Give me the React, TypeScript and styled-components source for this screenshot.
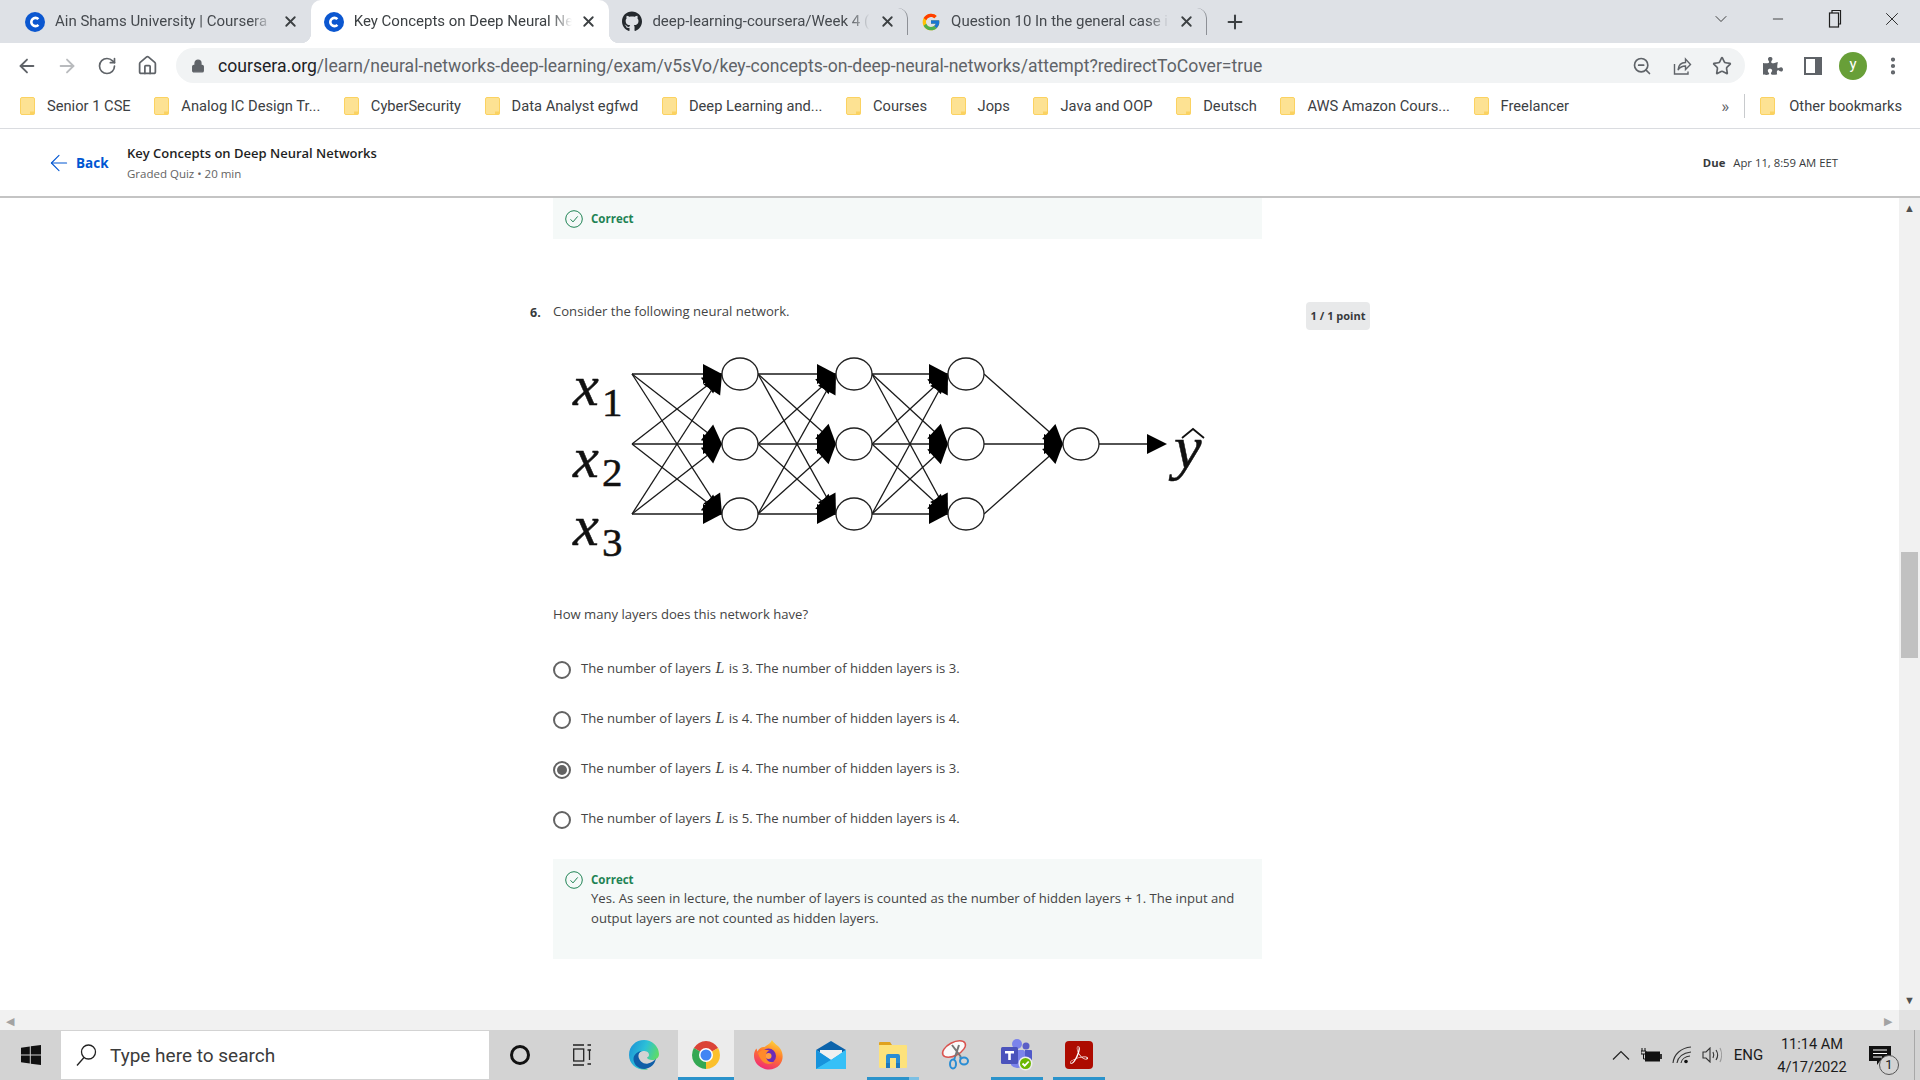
import * as React from 'react';
import styled, { createGlobalStyle } from 'styled-components';
import { ArrowLeft, ArrowRight, RotateCw, House, ZoomOut, Star, X, Plus, ChevronDown, Minus, Lock, EllipsisVertical } from 'lucide-react';
import { FaGithub, FaPuzzlePiece } from 'react-icons/fa';
import { FcGoogle } from 'react-icons/fc';
import { SiAdobeacrobatreader } from 'react-icons/si';

const GlobalStyle = createGlobalStyle`
	html, body {
		margin: 0;
		padding: 0;
		background: #fff;
		overflow: hidden;
	}
	* {
		box-sizing: border-box;
	}
`;

const UI_FONT = `Roboto, "Liberation Sans", sans-serif`;
const PAGE_FONT = `"Open Sans", "Noto Sans", sans-serif`;

const Screen = styled.div`
	width: 1920px;
	height: 1080px;
	display: flex;
	flex-direction: column;
	overflow: hidden;
	font-family: ${PAGE_FONT};
`;

/* browser chrome */
const TabStrip = styled.div`
	height: 43px;
	flex: none;
	display: flex;
	padding-left: 12px;
	background: #dee1e6;
	font-family: ${UI_FONT};
`;

const Tab = styled.div<{ $active?: boolean; $divider?: boolean }>`
	position: relative;
	width: 298.7px;
	height: 43px;
	display: flex;
	align-items: center;
	padding-left: 13px;
	color: ${({ $active }) => ($active ? '#3c4043' : '#45494e')};
	background: ${({ $active }) => ($active ? '#fff' : 'transparent')};
	border-radius: 10px 10px 0 0;
	border-right: ${({ $divider }) => ($divider ? '1px solid #8d9096' : '0')};
	background-clip: padding-box;

	${({ $divider }) => ($divider ? 'height: 27px; margin-top: 8px;' : '')}

	${({ $active }) =>
		$active
			? `
		&::before, &::after {
			content: '';
			position: absolute;
			bottom: 0;
			width: 10px;
			height: 10px;
		}
		&::before {
			left: -10px;
			background: radial-gradient(circle at 0 0, #dee1e6 10px, #fff 10.5px);
		}
		&::after {
			right: -10px;
			background: radial-gradient(circle at 100% 0, #dee1e6 10px, #fff 10.5px);
		}
	`
			: ''}
`;

const Favicon = styled.span`
	width: 20px;
	height: 20px;
	flex: none;
	display: flex;
	align-items: center;
	justify-content: center;
`;

const TabTitle = styled.span`
	width: 222px;
	margin-left: 10px;
	padding-bottom: 2px;
	font-size: 15px;
	white-space: nowrap;
	-webkit-mask-image: linear-gradient(90deg, #000 196px, transparent 218px);
	mask-image: linear-gradient(90deg, #000 196px, transparent 218px);
`;

const TabClose = styled.span`
	width: 20px;
	height: 20px;
	margin-left: 3px;
	flex: none;
	display: flex;
	align-items: center;
	justify-content: center;
	color: #3c4043;
`;

const NewTab = styled.span`
	width: 30px;
	height: 43px;
	margin-left: 13px;
	display: flex;
	align-items: center;
	justify-content: center;
	color: #3c4043;
`;

const WindowControls = styled.div`
	margin-left: auto;
	display: flex;
`;

const WindowButton = styled.span`
	width: 57px;
	height: 38px;
	display: flex;
	align-items: center;
	justify-content: center;
	color: #1f1f1f;
`;

const Toolbar = styled.div`
	height: 45px;
	flex: none;
	display: flex;
	align-items: center;
	padding: 0 7px;
	background: #fff;
	font-family: ${UI_FONT};
`;

const ToolButton = styled.span<{ $muted?: boolean }>`
	width: 40px;
	height: 35px;
	flex: none;
	display: flex;
	align-items: center;
	justify-content: center;
	color: ${({ $muted }) => ($muted ? '#b9bbbe' : '#5f6368')};
`;

const Omnibox = styled.div`
	flex: 1;
	height: 35px;
	margin: 0 8px 0 9px;
	display: flex;
	align-items: center;
	border-radius: 18px;
	background: #f1f3f4;
	padding: 0 3px 0 12px;
	font-size: 17.6px;
	color: #5f6368;
`;

const LockIcon = styled.span`
	width: 20px;
	display: flex;
	justify-content: center;
	color: #5f6368;
`;

const UrlText = styled.span`
	margin-left: 10px;
	white-space: nowrap;

	b {
		font-weight: 400;
		color: #202124;
	}
`;

const OmniboxActions = styled.div`
	margin-left: auto;
	display: flex;
`;

const Avatar = styled.span`
	width: 28px;
	height: 28px;
	border-radius: 50%;
	background: #689f38;
	color: #fff;
	font-size: 15px;
	display: flex;
	align-items: center;
	justify-content: center;
	padding-bottom: 3px;
`;

const BookmarkBar = styled.div`
	height: 41px;
	flex: none;
	display: flex;
	align-items: center;
	padding: 0 0 5px 20px;
	gap: 23.6px;
	background: #fff;
	border-bottom: 1px solid #dadce0;
	font-family: ${UI_FONT};
	font-size: 14.7px;
	color: #3c4043;
`;

const Bookmark = styled.span`
	display: flex;
	align-items: center;
	gap: 12px;
	white-space: nowrap;
`;

const OtherBookmarks = styled(Bookmark)`
	gap: 14px;
`;

const BookmarkOverflow = styled.div`
	margin-left: auto;
	display: flex;
	align-items: center;
	gap: 21px;
	padding-right: 18px;
`;

const Chevrons = styled.span`
	font-size: 17px;
	color: #5f6368;
	padding-right: 15px;
	margin-right: -6px;
	border-right: 1px solid #c8cacd;
	line-height: 24px;
`;

/* coursera page */
const CourseHeader = styled.header`
	height: 69px;
	flex: none;
	display: flex;
	align-items: center;
	padding: 0 82px 0 50px;
	background: #fff;
	border-bottom: 2px solid #c4c4c4;
`;

const BackLink = styled.span`
	display: flex;
	align-items: center;
	width: 77px;
	color: #0056d2;
	font-size: 13.5px;
	font-weight: 700;
`;

const BackArrow = styled(ArrowLeft)`
	margin: 0 4px 0 -4px;
	flex: none;
`;

const CourseTitle = styled.div`
	display: flex;
	flex-direction: column;
	gap: 4px;
	padding-bottom: 1px;
`;

const CourseName = styled.span`
	font-size: 13px;
	font-weight: 600;
	line-height: 18px;
	color: #1f1f1f;
`;

const CourseMeta = styled.span`
	font-size: 11.5px;
	line-height: 15px;
	color: #636363;
`;

const DueDate = styled.div`
	margin-left: auto;
	font-size: 11.3px;
	color: #373a3c;

	b {
		font-weight: 700;
		margin-right: 8px;
	}
`;

const PageBody = styled.div`
	flex: 1;
	min-height: 0;
	display: flex;
	background: #fff;
`;

const QuizColumn = styled.main`
	flex: 1;
	min-width: 0;
	padding-left: 530px;
	overflow: hidden;
`;

const Feedback = styled.div<{ $height: number; $indent?: boolean }>`
	width: 709px;
	height: ${({ $height }) => $height}px;
	margin-left: ${({ $indent }) => ($indent ? '23px' : '0')};
	padding: 12px 20px 0 12px;
	display: grid;
	grid-template-columns: 18px 1fr;
	align-content: start;
	column-gap: 8px;
	background: #f5f9f8;
`;

const CorrectLabel = styled.div`
	font-size: 11.5px;
	font-weight: 700;
	line-height: 18px;
	color: #1f8354;
`;

const FeedbackText = styled.div`
	grid-column: 2;
	margin-top: -1px;
	font-size: 13.1px;
	line-height: 20px;
	color: #444;
`;

const QuestionRow = styled.section`
	margin-top: 63px;
	display: grid;
	grid-template-columns: 23px 709px auto;
	justify-content: start;
`;

const QuestionNumber = styled.div`
	font-size: 12.5px;
	font-weight: 700;
	line-height: 22px;
	color: #373a3c;
`;

const Prompt = styled.p`
	margin: 0;
	font-size: 13.1px;
	line-height: 18px;
	color: #444;
`;

const NetworkFigure = styled.svg`
	display: block;
	width: 700px;
	height: 230px;
	margin-top: 30px;
`;

const SubPrompt = styled(Prompt)`
	margin-top: 25px;
`;

const Options = styled.div`
	margin-top: 22px;
	display: flex;
	flex-direction: column;
`;

const Option = styled.label`
	height: 50px;
	display: flex;
	align-items: center;
	gap: 10px;
	font-size: 13.1px;
	color: #444;
`;

const Radio = styled.span<{ $checked?: boolean }>`
	width: 18px;
	height: 18px;
	flex: none;
	display: flex;
	align-items: center;
	justify-content: center;
	border: 2px solid #636363;
	border-radius: 50%;

	&::after {
		content: '';
		width: 10px;
		height: 10px;
		border-radius: 50%;
		background: ${({ $checked }) => ($checked ? '#636363' : 'transparent')};
	}
`;

const OptionText = styled.span`
	padding-bottom: 4px;

	i {
		margin: 0 1px;
		font-family: 'Liberation Serif', serif;
		font-size: 16px;
	}
`;

const AnswerFeedback = styled(Feedback)`
	margin-top: 14px;
`;

const PointBadge = styled.div`
	margin-left: 44px;
	width: 64px;
	height: 28px;
	display: flex;
	align-items: center;
	justify-content: center;
	padding-bottom: 2px;
	border-radius: 4px;
	background: #e8e9ea;
	font-size: 11px;
	font-weight: 700;
	color: #373a3c;
`;

const VerticalScrollbar = styled.div`
	width: 21px;
	flex: none;
	display: flex;
	flex-direction: column;
	align-items: center;
	background: #f1f1f1;
	color: #505050;
`;

const ScrollArrow = styled.span`
	width: 17px;
	height: 20px;
	font-size: 11px;
	line-height: 20px;
	text-align: center;
`;

const ScrollThumb = styled.div`
	width: 17px;
	height: 106px;
	margin-top: 334px;
	background: #c1c1c1;
`;

const ScrollSpacer = styled.div`
	flex: 1;
`;

const HorizontalScrollbar = styled.div`
	height: 20px;
	flex: none;
	display: flex;
	align-items: center;
	justify-content: space-between;
	padding: 0 7px 0 6px;
	background: #f1f1f1;
	border-right: 21px solid #e2e2e2;
	font-size: 11px;
	color: #a3a3a3;
`;

/* windows taskbar */
const Taskbar = styled.footer`
	height: 50px;
	flex: none;
	display: flex;
	align-items: center;
	background: #d3d3d3;
	color: #1c1c1c;
	font-family: ${UI_FONT};
`;

const StartButton = styled.span`
	width: 61px;
	height: 50px;
	flex: none;
	display: flex;
	align-items: center;
	justify-content: center;
`;

const SearchBox = styled.div`
	width: 428px;
	height: 48px;
	flex: none;
	display: flex;
	align-items: center;
	gap: 13px;
	padding-left: 14px;
	background: #fff;
	font-size: 19px;
	color: #3b3b3b;
`;

const TaskCell = styled.span<{ $running?: boolean; $selected?: boolean; $stacked?: boolean }>`
	width: ${({ $selected }) => ($selected ? '56px' : '52px')};
	height: 50px;
	margin: 0 ${({ $selected }) => ($selected ? '3.05px' : '5.05px')};
	flex: none;
	display: flex;
	align-items: center;
	justify-content: center;
	background: ${({ $selected }) => ($selected ? '#ececec' : 'transparent')};
	border-bottom: 3px solid ${({ $running }) => ($running ? '#2b93cb' : 'transparent')};
	${({ $stacked }) => ($stacked ? 'border-image: linear-gradient(90deg, #2b93cb 80%, #7cc0e4 80%) 1;' : '')}
	padding-top: 3px;
`;

const Tray = styled.div`
	margin-left: auto;
	display: flex;
	align-items: center;
	height: 50px;
`;

const TrayIcon = styled.span<{ $width: number }>`
	width: ${({ $width }) => $width}px;
	height: 50px;
	display: flex;
	align-items: center;
	justify-content: center;
	font-size: 15px;
	color: #1c1c1c;
`;

const Clock = styled.div`
	width: 82px;
	padding-top: 2px;
	display: flex;
	flex-direction: column;
	align-items: center;
	gap: 4px;
	font-size: 14.6px;
	line-height: 19px;
	color: #1c1c1c;
`;

const NotificationCell = styled.span`
	position: relative;
	width: 62px;
	height: 50px;
	display: flex;
	align-items: center;
	padding-left: 16px;
	border-right: 1px solid #a8a8a8;
`;

const NotificationCount = styled.span`
	position: absolute;
	left: 26px;
	top: 25px;
	width: 20px;
	height: 20px;
	border-radius: 50%;
	border: 1px solid #555;
	background: #d3d3d3;
	font-size: 13px;
	line-height: 18px;
	text-align: center;
`;

const ShowDesktop = styled.span`
	width: 5px;
`;

const CourseraIcon = () => (
	<svg width="20" height="20" viewBox="0 0 20 20">
		<circle cx="10" cy="10" r="10" fill="#0b57d0" />
		<path d="M13.4 7.2a4.1 4.1 0 1 0 0 5.6" fill="none" stroke="#fff" strokeWidth="2.6" />
	</svg>
);

const FolderIcon = () => (
	<svg width="15" height="18" viewBox="0 0 15 18">
		<rect x="0.5" y="0.5" width="14" height="17" rx="1.5" fill="#fde293" stroke="#fbd261" />
		<path d="M10 17.5v-3h4.5v3z" fill="#fbd261" />
	</svg>
);

const RestoreIcon = () => (
	<svg width="14" height="20" viewBox="0 0 14 20" fill="none" stroke="#1f1f1f" strokeWidth="1.2">
		<rect x="1.5" y="4" width="9" height="14" />
		<path d="M4 4V1.5h8.5V15H10.5" />
	</svg>
);

const ShareIcon = () => (
	<svg width="20" height="20" viewBox="0 0 20 20" fill="none" stroke="#5f6368" strokeWidth="1.4">
		<path d="M2.5 8v10h13.5v-2.5" />
		<path d="M6 14c.5-5 3.5-7.5 7.5-7.5V3l5 5.5-5 5V10c-3.200 0-5.700 1.200-7.500 4z" />
	</svg>
);

const PanelIcon = () => (
	<svg width="18" height="18" viewBox="0 0 18 18">
		<path fillRule="evenodd" d="M0 0h18v18H0zM2 2v14h9V2z" fill="#5f6368" />
	</svg>
);

const CorrectIcon = () => (
	<svg width="18" height="18" viewBox="0 0 18 18" fill="none" stroke="#1f8354">
		<circle cx="9" cy="9" r="8.3" strokeWidth="1" />
		<path d="M5.500 9.300l2.500 2.600 4.700-5.500" strokeWidth="1" />
	</svg>
);

const WindowsLogo = () => (
	<svg width="20" height="20" viewBox="0 0 20 20" fill="#111">
		<path d="M0 2.800l8.800-1.300v8H0zM9.800 1.300L20 0v9.500H9.800zM0 10.500h8.800v8L0 17.200zM9.800 10.500H20V20L9.800 18.700z" />
	</svg>
);

const SearchGlass = () => (
	<svg width="22" height="22" viewBox="0 0 22 22" fill="none" stroke="#222" strokeWidth="1.300">
		<circle cx="13.500" cy="8" r="7" />
		<path d="M9 13.500L2 21.500" />
	</svg>
);

const CortanaIcon = () => (
	<svg width="22" height="22" viewBox="0 0 22 22">
		<circle cx="11" cy="11" r="8.500" fill="none" stroke="#111" strokeWidth="3" />
	</svg>
);

const TaskViewIcon = () => (
	<svg width="18" height="22" viewBox="0 0 18 22" fill="none" stroke="#222" strokeWidth="1.300">
		<path d="M0 1h11M0 21h11" />
		<rect x="0.700" y="5" width="10" height="12" />
		<path d="M14.500 1h3.500M14.500 6h3.500M16.500 6v10M14.500 20h3.500" />
	</svg>
);

const EdgeIcon = () => (
	<svg width="30" height="30" viewBox="0 0 30 30">
		<defs>
			<linearGradient id="edgeGrad" x1="0" y1="0" x2="1" y2="0.400">
				<stop offset="0" stopColor="#1a8ed6" />
				<stop offset="0.550" stopColor="#2cc0d8" />
				<stop offset="1" stopColor="#5ddc68" />
			</linearGradient>
		</defs>
		<path d="M15 0a15 15 0 0 1 15 14c0 4-3.500 6-7 6-2.500 0-5-1-5-2.500 3-1 3-6-2.500-6.500-5 0-8 4-6.500 9 1 3.500 5 7 10 9.500C9 31 0 25 0 15 0 6 7 0 15 0z" fill="url(#edgeGrad)" />
		<path d="M9.500 17c1 4 5 7.500 9.500 6.500 3-.7 6-2.500 8-5-1 5-5 10-11.500 10.500C8 29 4 23 4.500 18c1-4 4-6.500 8-7-2 1-3.500 3-3 6z" fill="#0f5ea8" />
	</svg>
);

const ChromeIcon = () => (
	<svg width="28" height="28" viewBox="0 0 28 28">
		<path d="M14 14L1.880 7a14 14 0 0 1 24.240 0z" fill="#db4437" />
		<path d="M14 14l12.120-7A14 14 0 0 1 14 28z" fill="#fbc02d" />
		<path d="M14 14v14A14 14 0 0 1 1.880 7z" fill="#34a853" />
		<circle cx="14" cy="14" r="7" fill="#fff" />
		<circle cx="14" cy="14" r="5.500" fill="#4285f4" />
	</svg>
);

const FirefoxIcon = () => (
	<svg width="29" height="30" viewBox="0 0 29 30">
		<defs>
			<linearGradient id="foxGrad" x1="0.700" y1="0" x2="0.300" y2="1">
				<stop offset="0" stopColor="#ffd83b" />
				<stop offset="0.450" stopColor="#ff7a2b" />
				<stop offset="1" stopColor="#f0267a" />
			</linearGradient>
		</defs>
		<path d="M18 0c1 3 6 5 8.500 9 3 5 3 11-1 16-4 4.500-11 6-17 3C3 25.500 0 21 0 15.500c0-3 1-5.500 2.500-7l1 3C5 8 8 6.500 10.500 7 14 4.500 17 3 18 0z" fill="url(#foxGrad)" />
		<circle cx="14.500" cy="16" r="7.500" fill="#6a2bb8" />
		<circle cx="14.500" cy="16" r="3" fill="#ff9f45" />
		<path d="M4 13c4-4 8-4 12-2-3 0-4 2-4 5 0 4 3 7 8 6-5 4-13 2-16-9z" fill="#ff8a2b" />
	</svg>
);

const MailIcon = () => (
	<svg width="30" height="28" viewBox="0 0 30 28">
		<path d="M0 9L15 0l15 9-15 9z" fill="#0b63ab" />
		<path d="M4 9h22v6l-11 6-11-6z" fill="#f0f0f0" />
		<path d="M0 9l15 10L30 9v19H0z" fill="#2ea9ec" />
		<path d="M0 9l15 10-15 9z" fill="#1793dc" />
		<path d="M30 9v19H0l15-9z" fill="#36c0f7" />
	</svg>
);

const FilesIcon = () => (
	<svg width="28" height="26" viewBox="0 0 28 26">
		<path d="M0 1a1 1 0 0 1 1-1h10l2 3H0z" fill="#e0a21e" />
		<path d="M0 3h27a1 1 0 0 1 1 1v21a1 1 0 0 1-1 1H1a1 1 0 0 1-1-1z" fill="#fde27b" />
		<path d="M7 21v-7a2 2 0 0 1 2-2h10a2 2 0 0 1 2 2v7h-4v-5h-6v5z" fill="#2a8dd4" />
		<path d="M7 21h4v5H7zM17 21h4v5h-4z" fill="#1f78bd" />
	</svg>
);

const SnipIcon = () => (
	<svg width="30" height="30" viewBox="0 0 30 30" fill="none">
		<ellipse cx="14" cy="9" rx="12.500" ry="6.500" transform="rotate(-28 14 9)" fill="#fafafa" stroke="#d9534f" strokeWidth="1.500" />
		<path d="M12 5l9 12M19 5l-4 12" stroke="#777" strokeWidth="2" />
		<ellipse cx="13" cy="24" rx="3" ry="4.500" stroke="#2a8dd4" strokeWidth="2" />
		<ellipse cx="24" cy="21" rx="4" ry="3.500" stroke="#2a8dd4" strokeWidth="2" />
		<path d="M15 17l-1 3M20 17l1 2" stroke="#2a8dd4" strokeWidth="2" />
	</svg>
);

const TeamsIcon = () => (
	<svg width="32" height="32" viewBox="0 0 32 32">
		<circle cx="25" cy="7" r="3.500" fill="#5b5fc7" />
		<circle cx="16" cy="5" r="5" fill="#7b83eb" />
		<path d="M10 11h12a2 2 0 0 1 2 2v10a8 8 0 0 1-14 3z" fill="#7b83eb" />
		<path d="M24 11h6a1 1 0 0 1 1 1v8a5 5 0 0 1-7 4z" fill="#5059c9" />
		<rect x="0" y="8" width="17" height="17" rx="1.500" fill="#4b53bc" />
		<path d="M4 12h9v2.500h-3.200V21H7.200v-6.500H4z" fill="#fff" />
		<circle cx="24.500" cy="24.500" r="7" fill="#eee" />
		<circle cx="24.500" cy="24.500" r="5.500" fill="#6bb700" />
		<path d="M21.500 24.500l2.200 2.200 4-4.200" fill="none" stroke="#fff" strokeWidth="1.800" />
	</svg>
);

const AcrobatIcon = () => (
	<svg width="28" height="28" viewBox="0 0 28 28">
		<rect width="28" height="28" rx="4" fill="#ad0b00" />
		<g transform="translate(5 5)">
			<SiAdobeacrobatreader size={18} color="#fff" />
		</g>
	</svg>
);

const SmallChevron = () => (
	<svg width="18" height="10" viewBox="0 0 18 10" fill="none" stroke="#222" strokeWidth="1.200">
		<path d="M1 9.500L9 1.500l8 8" />
	</svg>
);

const BatteryIcon = () => (
	<svg width="21" height="14" viewBox="0 0 21 14">
		<rect x="4" y="3.500" width="15" height="10" fill="#111" />
		<rect x="19" y="6" width="2" height="5" fill="#333" />
		<path d="M1 0v3M4 0v3M0 3h5v3H0zM2.500 6v5h2" fill="none" stroke="#111" strokeWidth="1" />
	</svg>
);

const WifiIcon = () => (
	<svg width="20" height="18" viewBox="0 0 20 18" fill="none" stroke="#333" strokeWidth="1.100">
		<path d="M1 17C2 8 9 2 19 1M5 17c1-6 6-10 14-11M9 17c.5-3.500 4-6.500 9-7" />
		<circle cx="14" cy="15.500" r="1.800" fill="#111" stroke="none" />
	</svg>
);

const SpeakerIcon = () => (
	<svg width="20" height="16" viewBox="0 0 20 16" fill="none" stroke="#333" strokeWidth="1.100">
		<path d="M1 5h3l4-4v14l-4-4H1z" />
		<path d="M11 5c1 2 1 4 0 6M14 3c2 3 2 7 0 10" />
		<path d="M18 1c2 4 2 10 0 14" stroke="#999" />
	</svg>
);

const NotificationIcon = () => (
	<svg width="22" height="19" viewBox="0 0 22 19">
		<path d="M0 0h22v15H11l-3 4v-4H0z" fill="#111" />
		<path d="M4 4h14M4 7.500h14M4 11h9" stroke="#fff" strokeWidth="1.200" />
	</svg>
);

const bookmarks = [
	'Senior 1 CSE',
	'Analog IC Design Tr...',
	'CyberSecurity',
	'Data Analyst egfwd',
	'Deep Learning and...',
	'Courses',
	'Jops',
	'Java and OOP',
	'Deutsch',
	'AWS Amazon Cours...',
	'Freelancer'
];

const options = [
	{ layers: 3, hidden: 3 },
	{ layers: 4, hidden: 4 },
	{ layers: 4, hidden: 3, checked: true },
	{ layers: 5, hidden: 4 }
];

// diagram coordinates are in page pixels, the viewBox starts at the figure's corner
const ROWS = [374, 444, 514];
const INPUT_X = 632;
const LAYER_X = [740, 854, 966];
const OUTPUT = { x: 1081, y: 444 };
const RX = 18;
const RY = 16;

type Edge = { x1: number; y1: number; x2: number; y2: number };

const edges: Edge[] = [];
[INPUT_X, ...LAYER_X.slice(0, 2)].forEach((from, i) => {
	const startX = i === 0 ? from : from + RX;
	ROWS.forEach((y1) => {
		ROWS.forEach((y2) => {
			edges.push({ x1: startX, y1, x2: LAYER_X[i] - RX, y2 });
		});
	});
});
ROWS.forEach((y1) => {
	edges.push({ x1: LAYER_X[2] + RX, y1, x2: OUTPUT.x - RX, y2: OUTPUT.y });
});

const arrowHead = ({ x1, y1, x2, y2 }: Edge) => {
	const len = Math.hypot(x2 - x1, y2 - y1);
	const ux = (x2 - x1) / len;
	const uy = (y2 - y1) / len;
	const baseX = x2 - ux * 19;
	const baseY = y2 - uy * 19;
	return `${x2},${y2} ${baseX - uy * 10},${baseY + ux * 10} ${baseX + uy * 10},${baseY - ux * 10}`;
};

const NetworkDiagram = () => (
	<NetworkFigure viewBox="553 350 700 230">
		{edges.map((e, i) => (
			<g key={i}>
				<line x1={e.x1} y1={e.y1} x2={e.x2} y2={e.y2} stroke="#1a1a1a" strokeWidth="1.300" />
				<polygon points={arrowHead(e)} fill="#000" />
			</g>
		))}
		{LAYER_X.map((x) =>
			ROWS.map((y) => <ellipse key={`${x}-${y}`} cx={x} cy={y} rx={RX} ry={RY} fill="#fff" stroke="#222" strokeWidth="1.300" />)
		)}
		<ellipse cx={OUTPUT.x} cy={OUTPUT.y} rx={RX} ry={RY} fill="#fff" stroke="#222" strokeWidth="1.300" />
		<line x1={OUTPUT.x + RX} y1={OUTPUT.y} x2="1150" y2={OUTPUT.y} stroke="#1a1a1a" strokeWidth="1.300" />
		<polygon points="1147,434 1167,444 1147,454" fill="#000" />
		{[
			{ n: 1, xBase: 405, subBase: 416 },
			{ n: 2, xBase: 477, subBase: 486 },
			{ n: 3, xBase: 545, subBase: 556 }
		].map(({ n, xBase, subBase }) => (
			<g key={n} fontFamily="'Liberation Serif', serif" fill="#111" stroke="#111" strokeWidth="0.500">
				<text x="573" y={xBase} fontSize="58" fontStyle="italic">
					x
				</text>
				<text x="602" y={subBase} fontSize="41">
					{n}
				</text>
			</g>
		))}
		<text x="1174" y="468" fontSize="62" fontStyle="italic" fontFamily="'Liberation Serif', serif" fill="#111" stroke="#111" strokeWidth="0.500">
			y
		</text>
		<path d="M1182 438l11-9 11 9" fill="none" stroke="#111" strokeWidth="1.800" />
	</NetworkFigure>
);

const App = () => (
	<Screen>
		<GlobalStyle />
		<TabStrip>
			<Tab>
				<Favicon>
					<CourseraIcon />
				</Favicon>
				<TabTitle>Ain Shams University | Coursera</TabTitle>
				<TabClose>
					<X size={17} strokeWidth={2.6} />
				</TabClose>
			</Tab>
			<Tab $active>
				<Favicon>
					<CourseraIcon />
				</Favicon>
				<TabTitle>Key Concepts on Deep Neural Ne</TabTitle>
				<TabClose>
					<X size={17} strokeWidth={2.6} />
				</TabClose>
			</Tab>
			<Tab $divider>
				<Favicon>
					<FaGithub size={21} color="#24292e" />
				</Favicon>
				<TabTitle>deep-learning-coursera/Week 4 (</TabTitle>
				<TabClose>
					<X size={17} strokeWidth={2.6} />
				</TabClose>
			</Tab>
			<Tab $divider>
				<Favicon>
					<FcGoogle size={20} />
				</Favicon>
				<TabTitle>Question 10 In the general case i</TabTitle>
				<TabClose>
					<X size={17} strokeWidth={2.6} />
				</TabClose>
			</Tab>
			<NewTab>
				<Plus size={22} strokeWidth={2.2} />
			</NewTab>
			<WindowControls>
				<WindowButton>
					<ChevronDown size={20} strokeWidth={1} />
				</WindowButton>
				<WindowButton>
					<Minus size={16} strokeWidth={1.2} />
				</WindowButton>
				<WindowButton>
					<RestoreIcon />
				</WindowButton>
				<WindowButton>
					<X size={22} strokeWidth={1} />
				</WindowButton>
			</WindowControls>
		</TabStrip>

		<Toolbar>
			<ToolButton>
				<ArrowLeft size={22} strokeWidth={2} />
			</ToolButton>
			<ToolButton $muted>
				<ArrowRight size={22} strokeWidth={2} />
			</ToolButton>
			<ToolButton>
				<RotateCw size={20} strokeWidth={2} />
			</ToolButton>
			<ToolButton>
				<House size={21} strokeWidth={2} />
			</ToolButton>
			<Omnibox>
				<LockIcon>
					<Lock size={14} fill="#5f6368" strokeWidth={2.4} />
				</LockIcon>
				<UrlText>
					<b>coursera.org</b>/learn/neural-networks-deep-learning/exam/v5sVo/key-concepts-on-deep-neural-networks/attempt?redirectToCover=true
				</UrlText>
				<OmniboxActions>
					<ToolButton>
						<ZoomOut size={20} strokeWidth={2} />
					</ToolButton>
					<ToolButton>
						<ShareIcon />
					</ToolButton>
					<ToolButton>
						<Star size={20} strokeWidth={2} />
					</ToolButton>
				</OmniboxActions>
			</Omnibox>
			<ToolButton>
				<FaPuzzlePiece size={20} />
			</ToolButton>
			<ToolButton>
				<PanelIcon />
			</ToolButton>
			<ToolButton>
				<Avatar>y</Avatar>
			</ToolButton>
			<ToolButton>
				<EllipsisVertical size={22} strokeWidth={2.6} />
			</ToolButton>
		</Toolbar>

		<BookmarkBar>
			{bookmarks.map((name) => (
				<Bookmark key={name}>
					<FolderIcon />
					{name}
				</Bookmark>
			))}
			<BookmarkOverflow>
				<Chevrons>»</Chevrons>
				<OtherBookmarks>
					<FolderIcon />
					Other bookmarks
				</OtherBookmarks>
			</BookmarkOverflow>
		</BookmarkBar>

		<CourseHeader>
			<BackLink>
				<BackArrow size={26} strokeWidth={1} />
				Back
			</BackLink>
			<CourseTitle>
				<CourseName>Key Concepts on Deep Neural Networks</CourseName>
				<CourseMeta>Graded Quiz • 20 min</CourseMeta>
			</CourseTitle>
			<DueDate>
				<b>Due</b>Apr 11, 8:59 AM EET
			</DueDate>
		</CourseHeader>

		<PageBody>
			<QuizColumn>
				<Feedback $height={41} $indent>
					<CorrectIcon />
					<CorrectLabel>Correct</CorrectLabel>
				</Feedback>
				<QuestionRow>
					<QuestionNumber>6.</QuestionNumber>
					<div>
						<Prompt>Consider the following neural network.</Prompt>
						<NetworkDiagram />
						<SubPrompt>How many layers does this network have?</SubPrompt>
						<Options>
							{options.map((o, i) => (
								<Option key={i}>
									<Radio $checked={o.checked} />
									<OptionText>
										The number of layers <i>L</i> is {o.layers}. The number of hidden layers is {o.hidden}.
									</OptionText>
								</Option>
							))}
						</Options>
						<AnswerFeedback $height={100}>
							<CorrectIcon />
							<CorrectLabel>Correct</CorrectLabel>
							<FeedbackText>
								Yes. As seen in lecture, the number of layers is counted as the number of hidden layers + 1. The input and output layers are not counted as hidden layers.
							</FeedbackText>
						</AnswerFeedback>
					</div>
					<PointBadge>1 / 1 point</PointBadge>
				</QuestionRow>
			</QuizColumn>
			<VerticalScrollbar>
				<ScrollArrow>▲</ScrollArrow>
				<ScrollThumb />
				<ScrollSpacer />
				<ScrollArrow>▼</ScrollArrow>
			</VerticalScrollbar>
		</PageBody>

		<HorizontalScrollbar>
			<span>◀</span>
			<span>▶</span>
		</HorizontalScrollbar>

		<Taskbar>
			<StartButton>
				<WindowsLogo />
			</StartButton>
			<SearchBox>
				<SearchGlass />
				Type here to search
			</SearchBox>
			<TaskCell>
				<CortanaIcon />
			</TaskCell>
			<TaskCell>
				<TaskViewIcon />
			</TaskCell>
			<TaskCell>
				<EdgeIcon />
			</TaskCell>
			<TaskCell $running $selected>
				<ChromeIcon />
			</TaskCell>
			<TaskCell>
				<FirefoxIcon />
			</TaskCell>
			<TaskCell>
				<MailIcon />
			</TaskCell>
			<TaskCell $running $stacked>
				<FilesIcon />
			</TaskCell>
			<TaskCell>
				<SnipIcon />
			</TaskCell>
			<TaskCell $running>
				<TeamsIcon />
			</TaskCell>
			<TaskCell $running>
				<AcrobatIcon />
			</TaskCell>
			<Tray>
				<TrayIcon $width={30}>
					<SmallChevron />
				</TrayIcon>
				<TrayIcon $width={30}>
					<BatteryIcon />
				</TrayIcon>
				<TrayIcon $width={31}>
					<WifiIcon />
				</TrayIcon>
				<TrayIcon $width={29}>
					<SpeakerIcon />
				</TrayIcon>
				<TrayIcon $width={45}>ENG</TrayIcon>
				<Clock>
					<span>11:14 AM</span>
					<span>4/17/2022</span>
				</Clock>
				<NotificationCell>
					<NotificationIcon />
					<NotificationCount>1</NotificationCount>
				</NotificationCell>
				<ShowDesktop />
			</Tray>
		</Taskbar>
	</Screen>
);

export default App;
